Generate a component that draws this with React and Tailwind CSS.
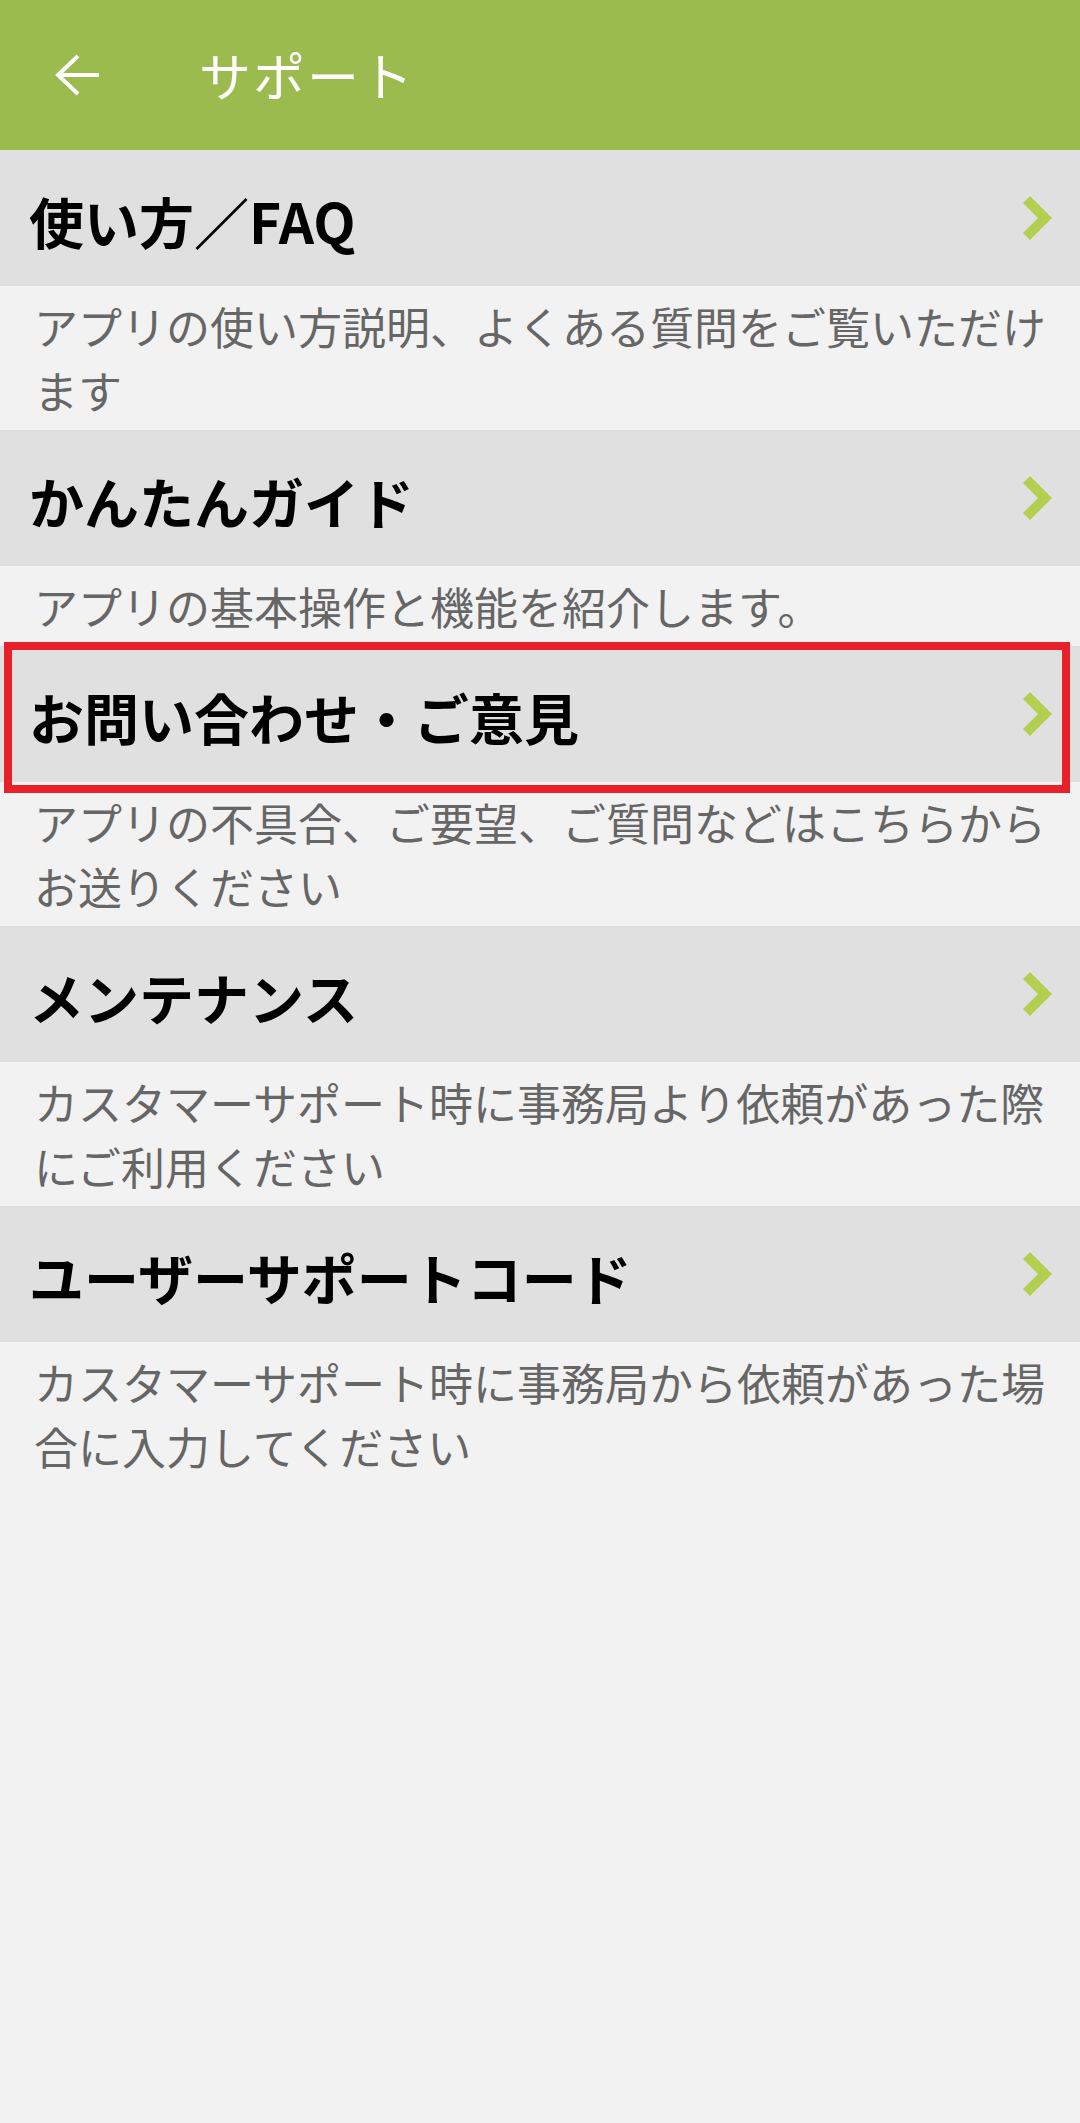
import React from 'react'

const items = [
  { title: '使い方／FAQ', desc: ['アプリの使い方説明、よくある質問をご覧いただけ', 'ます'] },
  { title: 'かんたんガイド', desc: ['アプリの基本操作と機能を紹介します。'] },
  { title: 'お問い合わせ・ご意見', desc: ['アプリの不具合、ご要望、ご質問などはこちらから', 'お送りください'], marked: true },
  { title: 'メンテナンス', desc: ['カスタマーサポート時に事務局より依頼があった際', 'にご利用ください'] },
  { title: 'ユーザーサポートコード', desc: ['カスタマーサポート時に事務局から依頼があった場', '合に入力してください'] },
]

function Chevron() {
  return (
    <svg width="29" height="44" viewBox="0 0 29 44">
      <polygon points="0,7 7,0 29,22 7,44 0,37 15,22" fill="#b3cf4f" />
    </svg>
  )
}

function Row({ item }) {
  return (
    <div>
      <div className='relative h-[136px] bg-[#e0e0e0] flex items-center justify-between pl-[29px] pr-[28px]'>
        <span className='text-[55px] font-bold text-black leading-none mt-[4px]'>{item.title}</span>
        <Chevron />
        {item.marked && (
          <div className='absolute -top-[4px] -bottom-[11px] left-[4px] right-[10px] border-[8px] border-[#e8202a] pointer-events-none' />
        )}
      </div>
      <div className='bg-[#f2f2f2] py-[8px] pl-[34px] pr-[10px] text-[44px] leading-[64px] text-[#666666] whitespace-nowrap'>
        {item.desc.map((line, i) => (
          <div key={i}>{line}</div>
        ))}
      </div>
    </div>
  )
}

export default function App() {
  return (
    <div className='min-h-[2123px] bg-[#f2f2f2]' style={{ fontFamily: '"Noto Sans CJK JP", "Noto Sans", sans-serif' }}>
      <header className='h-[150px] bg-[#9bbb4f] flex items-center'>
        <svg className='ml-[55px]' width="44" height="42" viewBox="0 0 44 42" fill="none" stroke="white" strokeWidth="4">
          <path d="M44 21H3" />
          <path d="M23 2L3 21L23 40" />
        </svg>
        <h1 className='ml-[100px] text-[52px] text-white font-normal tracking-[2px]'>サポート</h1>
      </header>
      {items.map((item, i) => (
        <Row key={i} item={item} />
      ))}
    </div>
  )
}
